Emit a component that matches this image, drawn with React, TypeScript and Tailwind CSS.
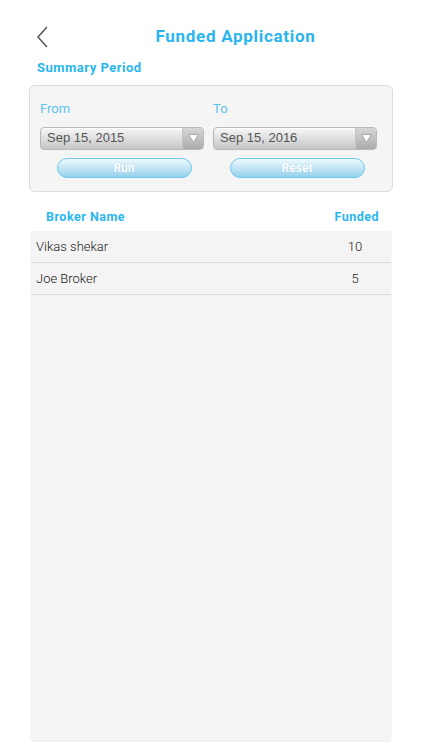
import React from 'react';

const ROWS = [
    { name: 'Vikas shekar', funded: 10 },
    { name: 'Joe Broker', funded: 5 },
];

function DateSelect({ value }: { value: string }) {
    return (
        <div className="flex h-[23px] w-[164px] overflow-hidden rounded-[4px] border border-[#b8b8b8] bg-gradient-to-b from-[#f7f7f7] to-[#c6c6c6] shadow-[inset_0_1px_0_#fff]">
            <div className="flex flex-1 items-center pl-[6px] font-['Liberation_Sans',sans-serif] text-[13px] text-[#555]">
                {value}
            </div>
            <div className="flex w-[21px] items-center justify-center border-l border-[#c4c4c4] bg-gradient-to-b from-[#d6d6d6] to-[#acacac]">
                <svg width="13" height="11" viewBox="0 0 13 11">
                    <path d="M1.5 1.5 L11.5 1.5 L6.5 9.5 Z" fill="#fdfdfd" stroke="#9a9a9a" strokeWidth="0.8" strokeLinejoin="round" />
                </svg>
            </div>
        </div>
    );
}

function PillButton({ label }: { label: string }) {
    return (
        <button className="flex h-[20px] w-[135px] items-center justify-center rounded-full border border-[#6ec8ef] bg-gradient-to-b from-[#eef9fe] via-[#c3e6f5] to-[#93d0ec] text-[12px] font-bold text-white [text-shadow:0_0_1px_#8cc6e0]">
            {label}
        </button>
    );
}

export default function App() {
    return (
        <div className="h-[750px] w-[422px] overflow-hidden bg-white font-['Roboto',sans-serif]">
            {/* Header */}
            <div className="flex items-center pl-[36px] pt-[24px]">
                <svg width="13" height="22" viewBox="0 0 13 22" className="shrink-0">
                    <path d="M11 1 L2 11 L11 21" fill="none" stroke="#555" strokeWidth="1.5" />
                </svg>
                <div className="flex-1 text-center text-[17px] font-bold tracking-[0.7px] text-[#29b6ef]">
                    Funded Application
                </div>
            </div>

            <div className="mt-[8px] pl-[37px] text-[13px] font-bold tracking-[0.5px] text-[#29b6ef]">
                Summary Period
            </div>

            {/* Period panel */}
            <div className="ml-[29px] mr-[29px] mt-[8px] h-[107px] rounded-[6px] border border-[#dcdcdc] bg-[#f5f5f5] pl-[10px] pt-[13px]">
                <div className="flex gap-[9px]">
                    {[
                        { label: 'From', value: 'Sep 15, 2015', btn: 'Run' },
                        { label: 'To', value: 'Sep 15, 2016', btn: 'Reset' },
                    ].map((c) => (
                        <div key={c.label} className="flex w-[164px] flex-col">
                            <div className="text-[13px] text-[#5cc3ee]">{c.label}</div>
                            <div className="mt-[8px]">
                                <DateSelect value={c.value} />
                            </div>
                            <div className="mt-[8px] flex justify-center pl-[4px]">
                                <PillButton label={c.btn} />
                            </div>
                        </div>
                    ))}
                </div>
            </div>

            {/* Table */}
            <div className="mx-[31px] mt-[15px] flex h-[20px] items-center justify-between pl-[15px] pr-[12px] text-[12.5px] font-bold tracking-[0.5px] text-[#29b6ef]">
                <span>Broker Name</span>
                <span>Funded</span>
            </div>
            <div className="mx-[31px] mt-[4px] h-[509px] bg-[#f4f4f4] shadow-[0_1px_2px_#e6e6e6]">
                {ROWS.map((r) => (
                    <div key={r.name} className="flex h-[32px] items-center border-b border-[#dadada] text-[13px] font-light text-[#222]">
                        <span className="flex-1 pl-[5px]">{r.name}</span>
                        <span className="w-[72px] text-center">{r.funded}</span>
                    </div>
                ))}
            </div>
        </div>
    );
}
